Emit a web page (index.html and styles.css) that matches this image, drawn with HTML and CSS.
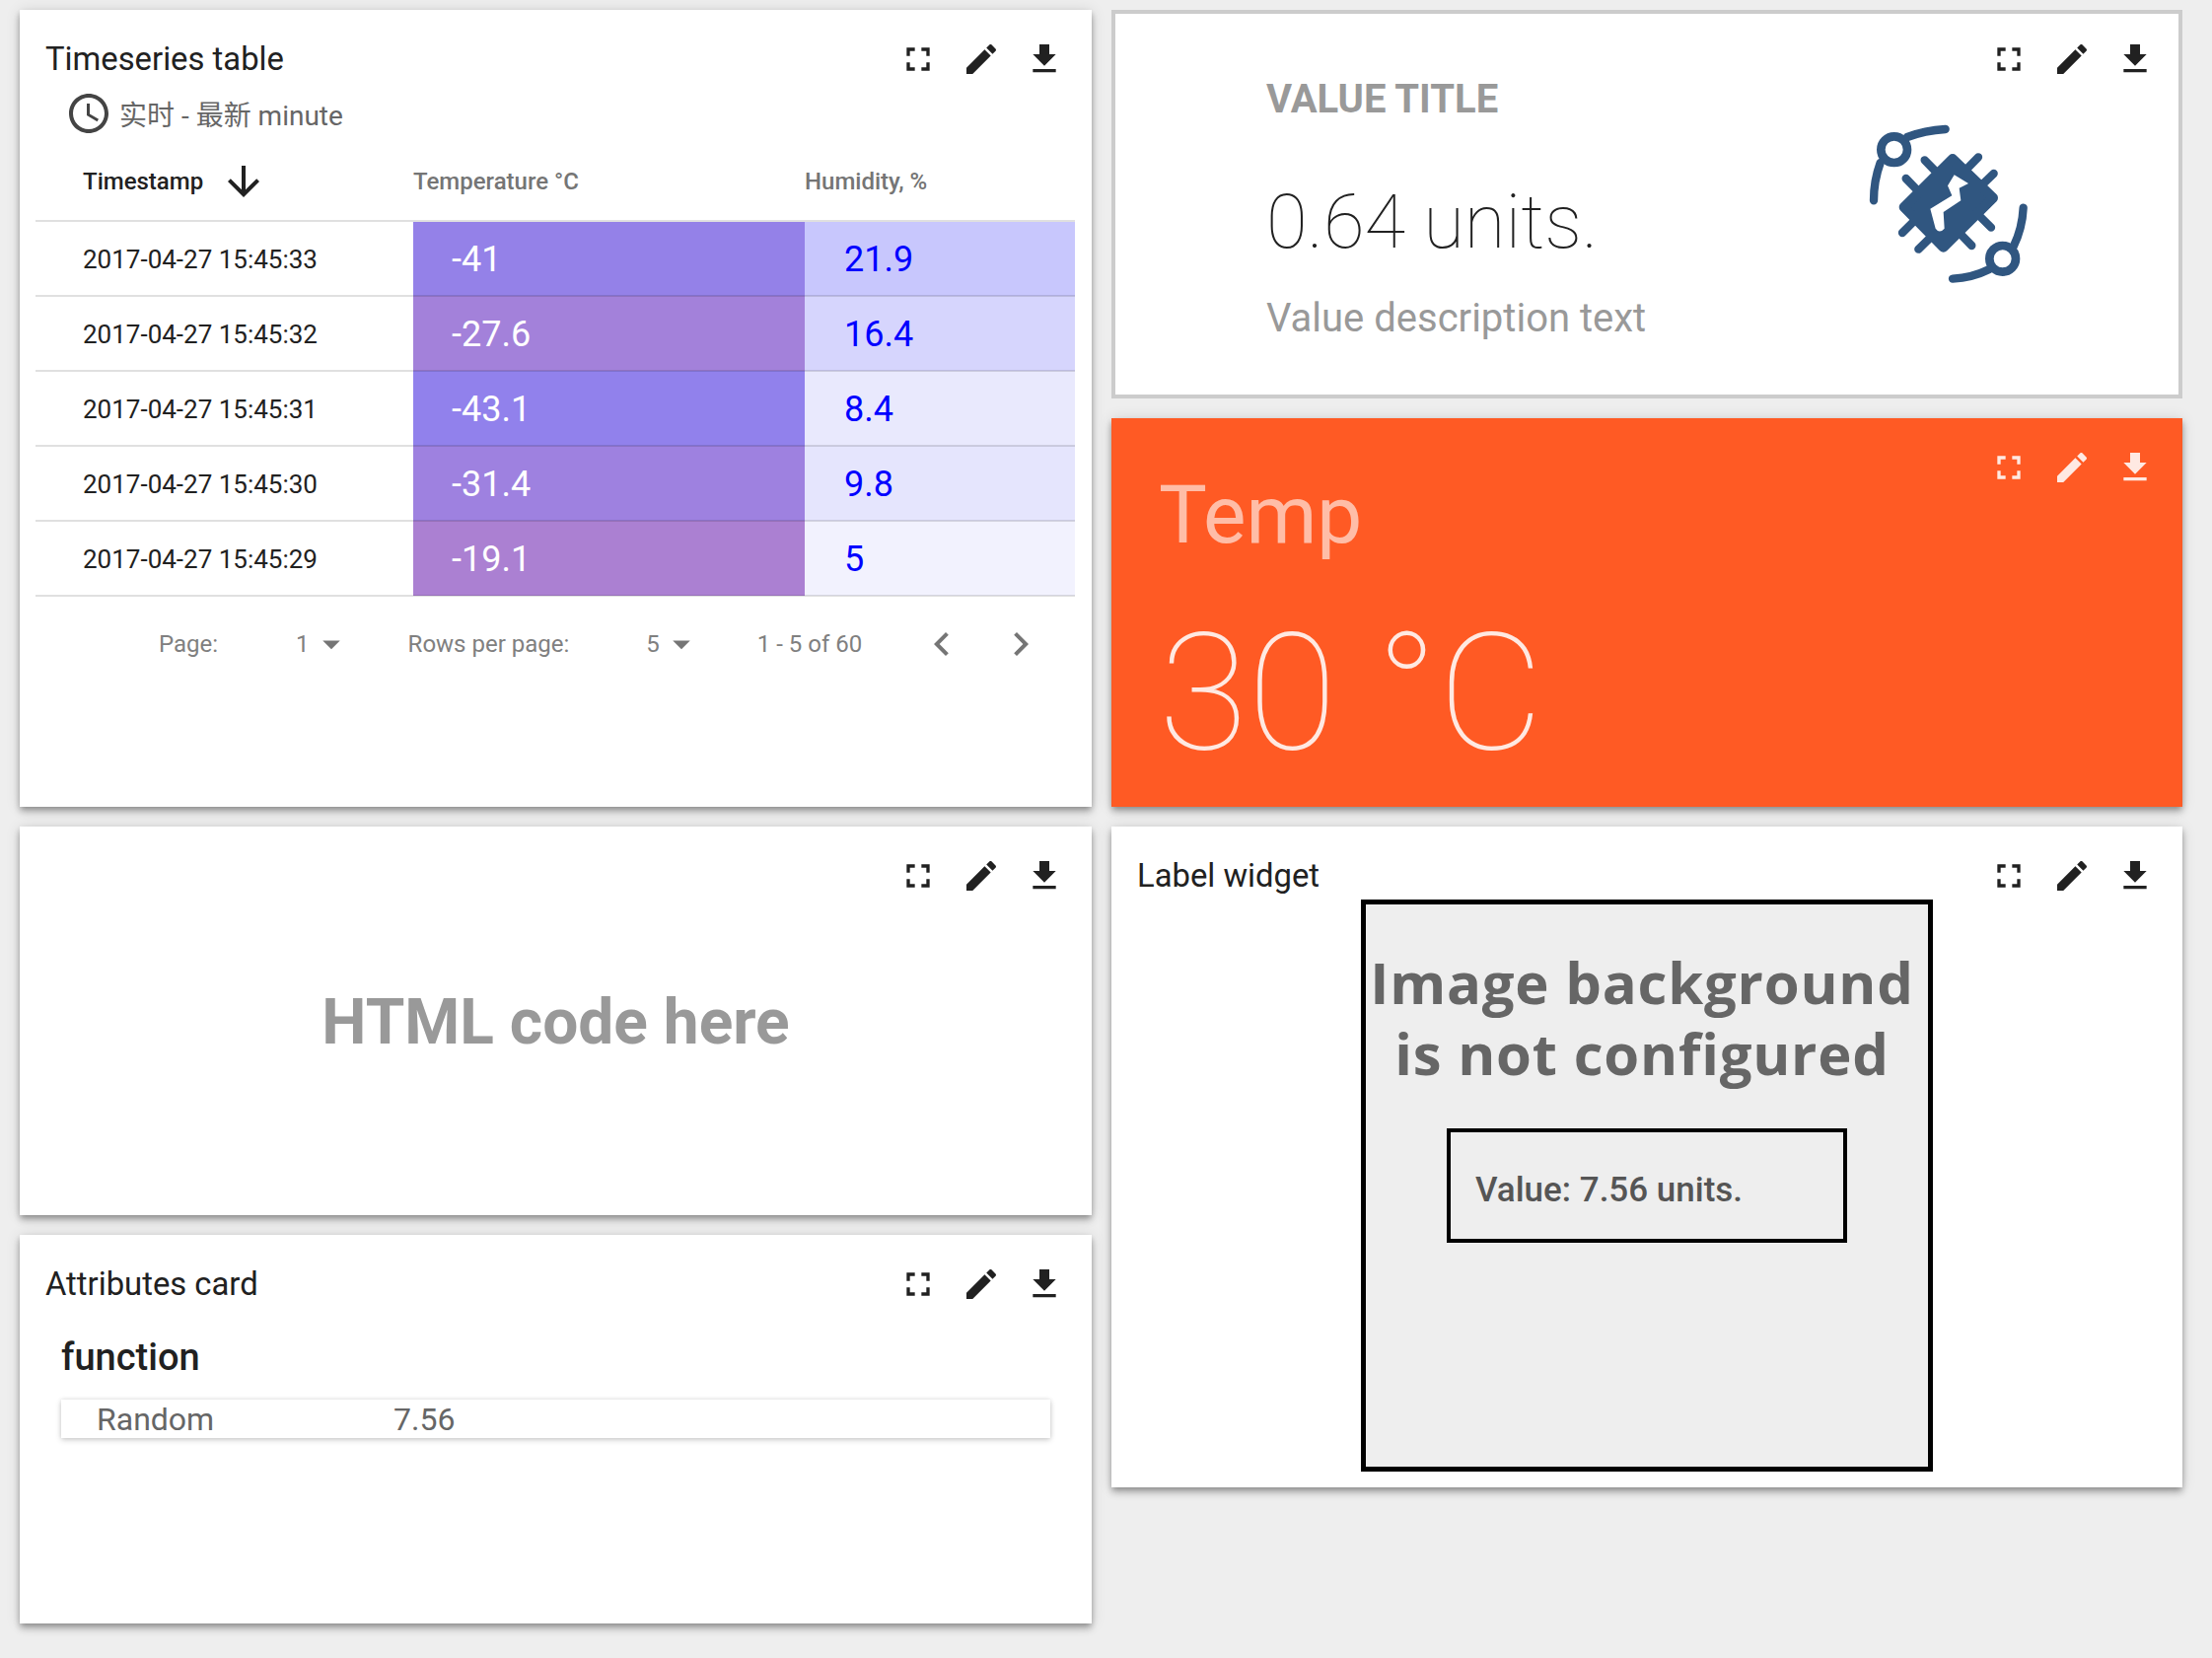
FILE: index.html
```html
<!DOCTYPE html>
<html lang="en">
<head>
  <meta charset="UTF-8" />
  <title>Dashboard widgets</title>
  <link rel="stylesheet" href="styles.css">
</head>
<body>
  <svg class="sprites" width="0" height="0">
    <symbol id="i-full" viewBox="0 0 24 24"><path d="M7 14H5v5h5v-2H7v-3zm-2-4h2V7h3V5H5v5zm12 7h-3v2h5v-5h-2v3zM14 5v2h3v3h2V5h-5z"/></symbol>
    <symbol id="i-edit" viewBox="0 0 24 24"><path d="M3 17.25V21h3.75L17.81 9.94l-3.75-3.75L3 17.25zM20.71 7.04c.39-.39.39-1.02 0-1.41l-2.34-2.34c-.39-.39-1.02-.39-1.41 0l-1.83 1.83 3.75 3.75 1.83-1.83z"/></symbol>
    <symbol id="i-down" viewBox="0 0 24 24"><path d="M19 9h-4V3H9v6H5l7 7 7-7zM5 18v2h14v-2H5z"/></symbol>
    <symbol id="i-drop" viewBox="0 0 24 24"><path d="M7 10l5 5 5-5z"/></symbol>
  </svg>

  <div class="dashboard">
    <!-- timeseries table -->
    <section class="card card-table">
      <div class="actions">
        <svg class="icon"><use href="#i-full"/></svg>
        <svg class="icon"><use href="#i-edit"/></svg>
        <svg class="icon"><use href="#i-down"/></svg>
      </div>
      <h3 class="card-title">Timeseries table</h3>
      <div class="timewindow">
        <svg class="clock" viewBox="0 0 24 24"><path d="M11.99 2C6.47 2 2 6.48 2 12s4.47 10 9.99 10C17.52 22 22 17.52 22 12S17.52 2 11.99 2zM12 20c-4.42 0-8-3.58-8-8s3.58-8 8-8 8 3.58 8 8-3.58 8-8 8zm.5-13H11v6l5.25 3.15.75-1.23-4.5-2.67z"/></svg>
        <span>实时 - 最新 minute</span>
      </div>
      <table class="ts-table">
        <colgroup><col class="col-time"><col class="col-temp"><col class="col-hum"></colgroup>
        <thead>
          <tr>
            <th class="th-time">
              <span class="th-sort">Timestamp
                <svg class="sort-arrow" viewBox="0 0 24 24"><path d="M20 12l-1.41-1.41L13 16.17V4h-2v12.17l-5.58-5.59L4 12l8 8 8-8z"/></svg>
              </span>
            </th>
            <th>Temperature °C</th>
            <th>Humidity, %</th>
          </tr>
        </thead>
        <tbody>
          <tr><td class="time">2017-04-27 15:45:33</td><td class="temp" style="background:#9481e8">-41</td><td class="hum" style="background:#c8c7fd">21.9</td></tr>
          <tr><td class="time">2017-04-27 15:45:32</td><td class="temp" style="background:#a381da">-27.6</td><td class="hum" style="background:#d6d5fd">16.4</td></tr>
          <tr><td class="time">2017-04-27 15:45:31</td><td class="temp" style="background:#9181ec">-43.1</td><td class="hum" style="background:#e9e9fd">8.4</td></tr>
          <tr><td class="time">2017-04-27 15:45:30</td><td class="temp" style="background:#9e81e0">-31.4</td><td class="hum" style="background:#e5e5fd">9.8</td></tr>
          <tr><td class="time">2017-04-27 15:45:29</td><td class="temp" style="background:#ab80d2">-19.1</td><td class="hum" style="background:#f2f2fe">5</td></tr>
        </tbody>
      </table>
      <div class="pager">
        <span class="pg-label">Page:</span>
        <span class="pg-select pg-select-page">1 <svg class="drop"><use href="#i-drop"/></svg></span>
        <span class="pg-label pg-rows">Rows per page:</span>
        <span class="pg-select pg-select-rows">5 <svg class="drop"><use href="#i-drop"/></svg></span>
        <span class="pg-range">1 - 5 of 60</span>
        <svg class="chevron" viewBox="0 0 24 24"><path d="M15.41 7.41L14 6l-6 6 6 6 1.41-1.41L10.83 12z"/></svg>
        <svg class="chevron chevron-next" viewBox="0 0 24 24"><path d="M10 6L8.59 7.41 13.17 12l-4.58 4.59L10 18l6-6z"/></svg>
      </div>
    </section>

    <!-- value card -->
    <section class="card card-value">
      <div class="actions">
        <svg class="icon"><use href="#i-full"/></svg>
        <svg class="icon"><use href="#i-edit"/></svg>
        <svg class="icon"><use href="#i-down"/></svg>
      </div>
      <div class="value-text">
        <div class="value-title">VALUE TITLE</div>
        <div class="value-number">0.64 units.</div>
        <div class="value-desc">Value description text</div>
      </div>
      <svg class="value-logo" viewBox="0 0 720 600">
        <g fill="none" stroke="#305680" stroke-linecap="round" stroke-linejoin="round">
          <g stroke-width="26">
            <circle cx="242" cy="155" r="40"/>
            <circle cx="572" cy="487" r="40"/>
          </g>
          <g stroke-width="25">
            <path d="M282 117Q335 97 398 93"/>
            <path d="M200 195Q180 250 180 310"/>
            <path d="M530 520Q480 545 420 548"/>
            <path d="M605 450Q632 395 635 332"/>
            <path d="M335 187L372 225M498 178L465 212M545 228L510 262M278 243L312 278M537 392L500 355M478 447L442 410M316 458L355 420M267 408L305 370"/>
          </g>
          <path d="M420 183L543 302L392 452L272 330Z" fill="#305680" stroke-width="30"/>
        </g>
        <path class="logo-bolt" d="M425 232L468 258L440 272L445 310L392 345L395 395Q380 412 368 395L352 335L418 295L405 265Z"/>
      </svg>
    </section>

    <!-- temperature card -->
    <section class="card card-temp">
      <div class="actions">
        <svg class="icon"><use href="#i-full"/></svg>
        <svg class="icon"><use href="#i-edit"/></svg>
        <svg class="icon"><use href="#i-down"/></svg>
      </div>
      <div class="temp-label">Temp</div>
      <div class="temp-value">30 °C</div>
    </section>

    <!-- html card -->
    <section class="card card-html">
      <div class="actions">
        <svg class="icon"><use href="#i-full"/></svg>
        <svg class="icon"><use href="#i-edit"/></svg>
        <svg class="icon"><use href="#i-down"/></svg>
      </div>
      <div class="html-text">HTML code here</div>
    </section>

    <!-- label widget -->
    <section class="card card-label">
      <div class="actions">
        <svg class="icon"><use href="#i-full"/></svg>
        <svg class="icon"><use href="#i-edit"/></svg>
        <svg class="icon"><use href="#i-down"/></svg>
      </div>
      <h3 class="card-title label-title">Label widget</h3>
      <div class="label-image">
        <div class="label-msg">Image background<br>is not configured</div>
        <div class="label-value">Value: 7.56 units.</div>
      </div>
    </section>

    <!-- attributes card -->
    <section class="card card-attr">
      <div class="actions">
        <svg class="icon"><use href="#i-full"/></svg>
        <svg class="icon"><use href="#i-edit"/></svg>
        <svg class="icon"><use href="#i-down"/></svg>
      </div>
      <h3 class="card-title">Attributes card</h3>
      <div class="attr-name">function</div>
      <div class="attr-row"><span class="attr-key">Random</span><span>7.56</span></div>
    </section>
  </div>
</body>
</html>
```

FILE: styles.css
```css
* {
  box-sizing: border-box;
}

body {
  margin: 0;
  background: #eeeeee;
  font-family: Roboto, sans-serif;
  color: #212121;
}

.sprites {
  position: absolute;
}

.dashboard {
  display: grid;
  grid-template-columns: 1087px 1086px;
  grid-auto-rows: 394px;
  gap: 20px;
  padding: 10px 30px 0 20px;
  height: 1681px;
  overflow: hidden;
}

.card {
  position: relative;
  background: #ffffff;
  box-shadow: 0 3px 6px -1px rgba(0,0,0,0.3), 0 6px 7px rgba(0,0,0,0.14), 0 1px 14px rgba(0,0,0,0.12);
}

.actions {
  position: absolute;
  top: 30px;
  right: 16px;
  display: flex;
  fill: #212121;
}

.icon {
  width: 64px;
  height: 40px;
}

.card-title {
  margin: 0;
  padding: 32px 0 0 26px;
  font-size: 32.8px;
  line-height: 36px;
  font-weight: 400;
}

/* timeseries table */
.card-table {
  grid-column: 1;
  grid-row: 1 / span 2;
}

.timewindow {
  display: flex;
  align-items: center;
  margin: 13px 0 0 46px;
  height: 48px;
  fill: #444444;
  color: #666666;
  font-size: 28px;
  font-family: Roboto, "Noto Sans CJK SC", sans-serif;
}

.clock {
  width: 48px;
  height: 48px;
  margin-right: 7px;
}

.ts-table {
  width: 1054px;
  margin: 10px 0 0 16px;
  border-collapse: collapse;
  table-layout: fixed;
}

.col-time { width: 383px; }
.col-temp { width: 397px; }
.col-hum { width: 274px; }

.ts-table th {
  height: 75px;
  padding: 0 0 4px;
  text-align: left;
  font-size: 24px;
  font-weight: 500;
  color: #757575;
  border-bottom: 2px solid #e0e0e0;
}

.ts-table .th-time {
  padding-left: 48px;
  color: #212121;
}

.th-sort {
  display: flex;
  align-items: center;
}

.sort-arrow {
  width: 48px;
  height: 48px;
  margin-left: 17px;
  fill: #212121;
}

.ts-table td {
  height: 76px;
  padding: 1px 0 0;
  border-bottom: 2px solid rgba(0,0,0,0.12);
}

.ts-table .time {
  padding-left: 48px;
  font-size: 26px;
  border-bottom-color: #e0e0e0;
}

.ts-table .temp {
  padding-left: 39px;
  font-size: 36px;
  color: #ffffff;
}

.ts-table .hum {
  padding-left: 40px;
  font-size: 36px;
  color: #0000ff;
}

.pager {
  display: flex;
  align-items: center;
  height: 95px;
  margin-left: 141px;
  font-size: 24px;
  color: #808080;
  fill: #757575;
}

.pg-select {
  display: flex;
  align-items: center;
  gap: 1px;
}

.pg-select-page { margin-left: 79px; }
.pg-rows { margin-left: 57px; }
.pg-select-rows { margin-left: 78px; }

.drop {
  width: 42px;
  height: 42px;
}

.pg-range {
  margin-left: 56px;
}

.chevron {
  width: 48px;
  height: 48px;
  margin-left: 57px;
}

.chevron-next {
  margin-left: 32px;
}

/* value card */
.card-value {
  grid-column: 2;
  grid-row: 1;
  display: flex;
  justify-content: space-between;
  border: 4px solid #cccccc;
  box-shadow: none;
}

.card-value .actions {
  top: 26px;
  right: 12px;
}

.value-text {
  padding: 63px 0 0 153px;
  color: #999999;
}

.value-title {
  font-size: 40px;
  line-height: 48px;
  font-weight: 700;
}

.value-number {
  margin-top: 55px;
  font-size: 76px;
  line-height: 90px;
  font-weight: 100;
  color: #212121;
}

.value-desc {
  margin-top: 29px;
  font-size: 40px;
  line-height: 48px;
}

.value-logo {
  width: 240px;
  height: 200px;
  margin: 86px 129px 0 0;
  filter: blur(0.6px);
}

.logo-bolt {
  fill: #ffffff;
}

/* temperature card */
.card-temp {
  grid-column: 2;
  grid-row: 2;
  background: #ff5a24;
  padding: 50px 0 0 48px;
}

.card-temp .actions {
  fill: rgba(255,255,255,0.87);
}

.temp-label {
  font-size: 82px;
  line-height: 96px;
  color: rgba(255,255,255,0.6);
}

.temp-value {
  margin-top: 38px;
  font-size: 165px;
  line-height: 190px;
  font-weight: 100;
  color: rgba(255,255,255,0.87);
}

/* html card */
.card-html {
  grid-column: 1;
  grid-row: 3;
  display: flex;
  align-items: center;
  justify-content: center;
}

.html-text {
  margin-top: 2px;
  font-size: 64px;
  font-weight: 700;
  color: #999999;
}

/* label widget */
.card-label {
  grid-column: 2;
  grid-row: 3 / span 2;
  height: 670px;
}

.label-title {
  height: 74px;
}

.label-image {
  width: 580px;
  height: 580px;
  margin: 0 auto;
  padding-top: 43px;
  border: 5px solid #000000;
  background: #eeeeee;
}

.label-msg {
  padding-right: 10px;
  font-family: "Open Sans", sans-serif;
  font-size: 58px;
  line-height: 72px;
  letter-spacing: 0.8px;
  font-weight: 700;
  color: #666666;
  text-align: center;
  white-space: nowrap;
}

.label-value {
  width: 406px;
  height: 116px;
  margin: 40px auto 0;
  padding: 38px 0 0 25px;
  border: 4px solid #000000;
  font-size: 35px;
  line-height: 42px;
  font-weight: 500;
  color: #555555;
}

/* attributes card */
.card-attr {
  grid-column: 1;
  grid-row: 4;
}

.attr-name {
  margin: 34px 0 0 42px;
  font-size: 38px;
  line-height: 44px;
  font-weight: 500;
}

.attr-row {
  display: flex;
  align-items: center;
  width: 1003px;
  height: 39px;
  margin: 21px 0 0 42px;
  padding-left: 36px;
  font-size: 32px;
  color: #666666;
  background: #ffffff;
  box-shadow: 0 2px 6px rgba(0,0,0,0.18), 0 0 4px rgba(0,0,0,0.1);
}

.attr-key {
  width: 301px;
}
```
